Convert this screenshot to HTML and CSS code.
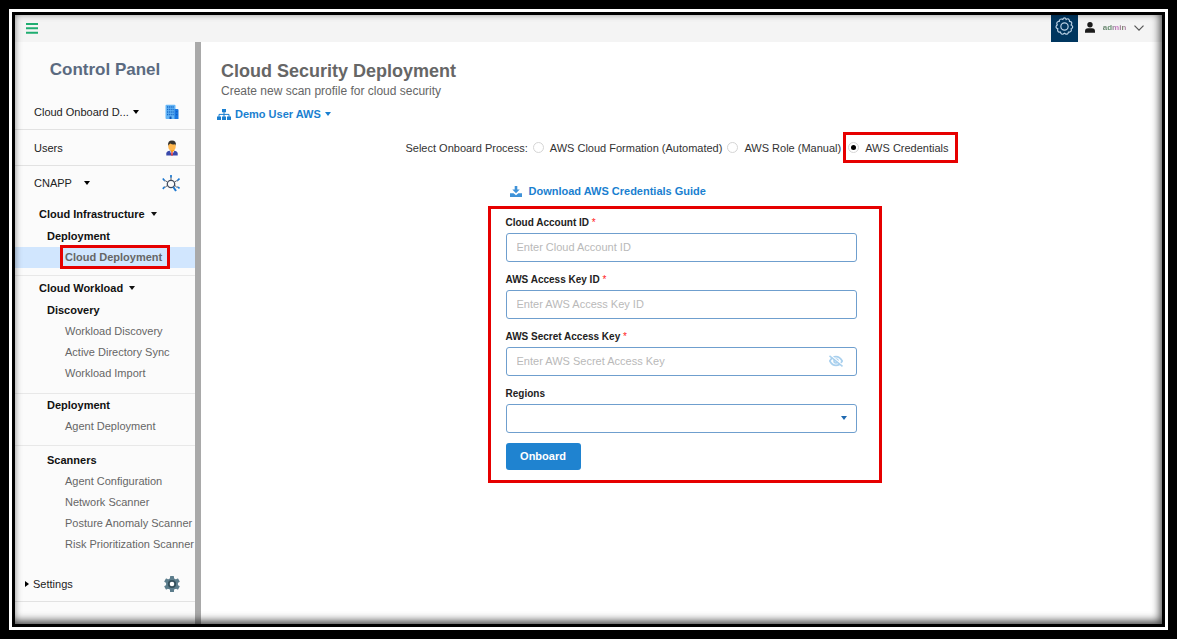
FILE: index.html
```html
<!DOCTYPE html>
<html lang="en">
<head>
<meta charset="utf-8">
<title>Cloud Security Deployment</title>
<link rel="stylesheet" href="styles.css">
</head>
<body>
<div class="frame">
<div class="mat">
<div class="app">
  <header class="topbar">
    <button class="icon-button menu" aria-label="Toggle menu">
      <svg width="12" height="11" viewBox="0 0 12 11"><path d="M0 0h12v2H0zM0 4.3h12v2H0zM0 8.8h12v2H0z" fill="#1fad70"/></svg>
    </button>
    <div class="account">
      <button class="icon-button gear" aria-label="Settings">
        <svg width="19" height="19" viewBox="0 0 24 24" fill="none" stroke="#b9d0e4" stroke-width="1.5"><circle cx="12" cy="12" r="4.6"/><path d="M10.300 2.200 Q12 .2 13.700 2.200 L14.100 3.100 Q17 .9 18.300 4.300 L18.300 5.500 Q21.900 5.600 21 9 L20.400 10 Q23.700 11.900 21.400 14.400 L20.400 15 Q21.500 18.500 18.200 19 L17 19 Q16.100 22.600 13.300 21.300 L12 20.500 Q9.200 23.100 7.300 20.300 L7 19 Q3.300 19.500 3.200 16.200 L3.600 15 Q.2 13.800 1.800 11 L2.900 10 Q1.100 6.900 4.100 5.600 L5.400 5.500 Q5.700 1.800 8.800 2.700 L9.900 3.200 Z"/></svg>
      </button>
      <button class="user">
        <svg width="10" height="11" viewBox="0 0 10 11" fill="#1b1b1b"><circle cx="5" cy="2.800" r="2.700"/><path d="M0 10.800V9.300Q0 6.300 3 6.300H7Q10 6.300 10 9.300V10.800Z"/></svg>
        <span class="user-name">admin</span>
        <svg width="10" height="6" viewBox="0 0 10 6" fill="none" stroke="#555" stroke-width="1.200"><path d="M.5 .6 5 5.100 9.500 .6"/></svg>
      </button>
    </div>
  </header>

  <div class="body">
    <nav class="sidebar">
      <h2 class="panel-title">Control Panel</h2>
      <button class="row ruled"><span class="row-label">Cloud Onboard D...</span><i class="caret"></i>
        <svg class="row-icon" width="16" height="16" viewBox="0 0 16 16"><rect x="1.500" y=".8" width="10" height="14.200" rx="1" fill="#64b5f6"/><path d="M10.500 5H13.500Q14.500 5 14.500 6V15H10.500Z" fill="#1976e0"/><path d="M3 3h7M3 5.500h7M3 8h7M3 10.500h7" stroke="#1769c8" stroke-width="1.300" stroke-dasharray="1.300 .8"/><path d="M5.500 12.500h2V15h-2zM12.300 7h1v1.300h-1zM12.300 10h1v1.300h-1z" fill="#0d55b5"/></svg>
      </button>
      <a class="row ruled" href="#"><span class="row-label">Users</span>
        <svg class="row-icon" width="16" height="16" viewBox="0 0 16 16"><path d="M2.300 15.500V13.500Q2.300 10.700 8 10.500 13.700 10.700 13.700 13.500V15.500Z" fill="#3949ab"/><path d="M5.800 9H10.200V11L8 13Z" fill="#ff9800"/><path d="M5.600 10.800 8 15 10.400 10.800 8 12.200Z" fill="#fff"/><path d="M7.400 12H8.600L9 15.500H7Z" fill="#e53935"/><ellipse cx="8" cy="6.200" rx="3.700" ry="4.300" fill="#ffb74d"/><path d="M4 6Q3.600 .6 8 .6 12.400 .6 12 6L11.300 4.300Q8 4.800 6.500 3.600L4.700 4.800Z" fill="#37342f"/></svg>
      </a>
      <button class="row cnapp"><span class="row-label">CNAPP</span><i class="caret"></i>
        <svg class="row-icon" width="18" height="17" viewBox="0 0 18 17" fill="none"><circle cx="9" cy="9" r="3.700" stroke="#414a5c" stroke-width="1.300"/><path d="M11.300 12 14 16" stroke="#1d78d0" stroke-width="2"/><path d="M9 5V1.500M12.500 7 14.500 5.800H16M5.500 7 3.500 5.800H2M12.900 10.500 14.500 12H16M5.300 10.500 3.500 12H2" stroke="#56606e"/><path d="M9 0V2.500M15.500 5.500 17.500 3.500M2.500 5.500 .8 3.500M16 12 17.500 13.500M2.500 12 .8 13.800" stroke="#1d78d0" stroke-width="1.700"/></svg>
      </button>

      <section class="group first">
        <button class="group-title">Cloud Infrastructure<i class="caret"></i></button>
        <h3 class="subtitle">Deployment</h3>
        <a class="item selected" href="#"><span class="marked">Cloud Deployment</span></a>
      </section>
      <section class="group workload">
        <button class="group-title">Cloud Workload<i class="caret"></i></button>
        <h3 class="subtitle">Discovery</h3>
        <a class="item" href="#">Workload Discovery</a>
        <a class="item" href="#">Active Directory Sync</a>
        <a class="item" href="#">Workload Import</a>
      </section>
      <section class="group">
        <h3 class="subtitle">Deployment</h3>
        <a class="item" href="#">Agent Deployment</a>
      </section>
      <section class="group scanners">
        <h3 class="subtitle">Scanners</h3>
        <a class="item" href="#">Agent Configuration</a>
        <a class="item" href="#">Network Scanner</a>
        <a class="item" href="#">Posture Anomaly Scanner</a>
        <a class="item" href="#">Risk Prioritization Scanner</a>
      </section>
      <button class="row ruled settings"><i class="caret side"></i><span class="row-label">Settings</span>
        <svg class="row-icon" width="16" height="16" viewBox="0 0 16 16"><g fill="#5c7d8c"><circle cx="8" cy="8" r="6"/><rect x="6" y="0" width="4" height="16" rx=".6"/><rect x="6" y="0" width="4" height="16" rx=".6" transform="rotate(60 8 8)"/><rect x="6" y="0" width="4" height="16" rx=".6" transform="rotate(120 8 8)"/></g><circle cx="8" cy="8" r="3.200" fill="#fff" stroke="#34505c" stroke-width="1.800"/></svg>
      </button>
    </nav>

    <main class="content">
      <h1 class="title">Cloud Security Deployment</h1>
      <p class="tagline">Create new scan profile for cloud security</p>
      <button class="tenant">
        <svg width="14" height="11" viewBox="0 0 14 11" fill="#1a7fd0"><path d="M5 0h4v3.200H5zM0 7.500h4V11H0zM5 7.500h4V11H5zM10 7.500h4V11h-4z"/><path d="M7 3V8M2 8V5.400H12V8" fill="none" stroke="#1a7fd0"/></svg>
        <span>Demo User AWS</span><i class="caret"></i>
      </button>

      <fieldset class="process" aria-labelledby="process-label">
        <span id="process-label">Select Onboard Process:</span>
        <label class="choice"><input type="radio" name="process">AWS Cloud Formation (Automated)</label>
        <label class="choice"><input type="radio" name="process">AWS Role (Manual)</label>
        <label class="choice chosen"><input type="radio" name="process" checked>AWS Credentials</label>
      </fieldset>

      <div class="form-area">
        <a class="guide" href="#">
          <svg width="12" height="11" viewBox="0 0 12 11" fill="#3f92d8"><path d="M4.700 0h2.600v3.500h2.400L6 7.300 2.300 3.500h2.400z"/><path d="M0 7.300H3.600L6 9.300 8.400 7.300H12V11H0Z"/></svg>
          Download AWS Credentials Guide
        </a>
        <form class="credentials">
          <div class="field">
            <label for="account">Cloud Account ID <span class="required">*</span></label>
            <input id="account" type="text" placeholder="Enter Cloud Account ID">
          </div>
          <div class="field">
            <label for="access">AWS Access Key ID <span class="required">*</span></label>
            <input id="access" type="text" placeholder="Enter AWS Access Key ID">
          </div>
          <div class="field">
            <label for="secret">AWS Secret Access Key <span class="required">*</span></label>
            <div class="control">
              <input id="secret" type="password" placeholder="Enter AWS Secret Access Key">
              <button type="button" class="icon-button reveal" aria-label="Show key">
                <svg width="14" height="12" viewBox="0 0 14 12" fill="none" stroke="#a9d0ee"><path d="M.8 6Q3.200 1.600 7 1.600T13.200 6Q10.800 10.400 7 10.400T.8 6Z" stroke-width="1.700"/><circle cx="7" cy="6" r="2" stroke-width="1.500"/><path d="M1.500 .2 14 10.400" stroke="#fff" stroke-width="1.400"/><path d="M.5 .8 13.500 11.400" stroke-width="1.500"/></svg>
              </button>
            </div>
          </div>
          <div class="field">
            <label for="regions">Regions</label>
            <div class="control">
              <select id="regions"><option></option></select>
              <i class="caret select-caret"></i>
            </div>
          </div>
          <button type="button" class="submit">Onboard</button>
        </form>
      </div>
    </main>
  </div>
</div>
</div>
</div>
</body>
</html>
```
FILE: styles.css
```css
* { box-sizing: border-box; }
body {
  margin: 0;
  font-family: "Liberation Sans", Arial, sans-serif;
  font-size: 11px;
  color: #333;
}
h1, h2, h3, p { margin: 0; }
a { color: inherit; text-decoration: none; }
button {
  margin: 0;
  padding: 0;
  border: 0;
  background: none;
  font: inherit;
  color: inherit;
  text-align: left;
  cursor: pointer;
}
svg { display: block; flex: none; }

/* Picture frame around the application */
.frame {
  display: flex;
  min-height: 100vh;
  padding: 9px;
  background: #000;
}
.mat {
  display: flex;
  flex: 1;
  border: 3px solid #fff;
}
.app {
  position: relative;
  display: flex;
  flex: 1;
  flex-direction: column;
  border: 3px solid #000;
  background: #fff;
}
.app::after {
  content: "";
  position: absolute;
  inset: 0;
  box-shadow: inset -2px -3px 9px rgba(0, 0, 0, .75);
  pointer-events: none;
}

.topbar {
  display: flex;
  justify-content: space-between;
  height: 27px;
  padding: 0 18px 0 11px;
  background: #f4f4f4;
}
.icon-button { display: flex; align-items: center; justify-content: center; }
.account { display: flex; }
.gear { width: 27px; padding-bottom: 5px; background: #00365f; }
.user { display: flex; align-items: center; gap: 6px; padding: 0 0 2px 7px; }
.user-name {
  width: 27px;
  background: linear-gradient(90deg, #6d7d70, #5f8f6a 35%, #d276cc 60%, #7a7f6c 80%, #e08ae0);
  background-clip: text;
  font-size: 8px;
  font-weight: bold;
  color: transparent;
  text-align: center;
}

.body { display: flex; flex: 1; }
.sidebar {
  display: flex;
  flex: none;
  flex-direction: column;
  width: 186px;
  padding-bottom: 22px;
  border-right: 6px solid #a9a9a9;
  background: #fbfbfb;
}
.panel-title {
  padding: 18px 0 14px;
  font-size: 17px;
  line-height: 20px;
  color: #5a6a80;
  text-align: center;
}
.caret {
  width: 0;
  height: 0;
  border: 3px solid transparent;
  border-top: 4px solid currentColor;
  border-bottom: 0;
}
.caret.side {
  border: 3px solid transparent;
  border-left: 4px solid currentColor;
  border-right: 0;
}
.row {
  display: flex;
  align-items: center;
  gap: 4px;
  height: 36px;
  padding: 0 15px 0 19px;
  color: #222;
}
.row .caret { color: #000; }
.row-icon { margin-left: auto; }
.cnapp { gap: 12px; height: 34px; }
.ruled { border-bottom: 1px solid #e2e2e2; }
.group { padding-bottom: 8px; border-bottom: 1px solid #e8e8e8; }
.group-title, .subtitle {
  display: flex;
  align-items: center;
  gap: 6px;
  height: 22px;
  font-size: 11px;
  font-weight: bold;
  color: #111;
}
.group-title { padding-left: 24px; }
.subtitle { padding-left: 32px; }
.item {
  display: block;
  padding-left: 50px;
  line-height: 21px;
  color: #666;
  white-space: nowrap;
}
.selected { background: #d1e6fe; font-weight: bold; }
.marked { position: relative; display: inline-block; }
.marked::after {
  content: "";
  position: absolute;
  inset: -2px -8px -1px -5px;
  border: 3px solid #e60000;
}
.first { padding: 3px 0 7px; }
.workload { padding: 1px 0 9px; }
.scanners { padding: 3px 0 11px; border-bottom: 0; }
.settings { padding-left: 10px; }

.content { flex: 1; padding: 18px 10px 18px 16px; }
.title {
  padding-left: 4px;
  font-size: 18px;
  line-height: 22px;
  color: #666;
}
.tagline {
  padding-left: 4px;
  font-size: 12px;
  line-height: 18px;
  color: #666;
}
.tenant {
  display: flex;
  align-items: center;
  gap: 4px;
  height: 28px;
  font-weight: bold;
  color: #1a7fd0;
}
.process {
  display: flex;
  align-items: center;
  justify-content: center;
  gap: 5px;
  height: 31px;
  margin: 4px 0 0;
  padding: 0 6px 0 0;
  border: 0;
}
.choice { display: flex; align-items: center; gap: 6px; }
.choice input {
  appearance: none;
  display: grid;
  place-items: center;
  width: 11px;
  height: 11px;
  margin: 0;
  border: 1px solid #d5d5d5;
  border-radius: 50%;
  background: #fff;
}
.choice input:checked::before {
  content: "";
  width: 5px;
  height: 5px;
  border-radius: 50%;
  background: #000;
}
.chosen {
  height: 31px;
  margin-left: -3px;
  padding: 0 6px 0 2px;
  border: 3px solid #e60000;
}
.form-area { width: 394px; max-width: 100%; margin: 20px auto 0; }
.guide {
  display: flex;
  align-items: center;
  gap: 7px;
  height: 16px;
  padding-left: 22px;
  font-weight: bold;
  color: #1a7fd0;
}
.credentials {
  margin-top: 7px;
  padding: 6px 22px 10px 15px;
  border: 3px solid #e60000;
}
.field { display: flex; flex-direction: column; gap: 2px; margin-bottom: 10px; }
.field label {
  font-size: 10px;
  font-weight: bold;
  line-height: 16px;
  color: #222;
}
.required { font-weight: normal; color: #f22; }
.control { position: relative; display: flex; }
.field input, .field select {
  appearance: none;
  width: 100%;
  height: 29px;
  padding: 0 10px 2px;
  border: 1px solid #6f9fce;
  border-radius: 3px;
  background: #fff;
  font: inherit;
  color: #333;
}
.field input::placeholder { color: #b9b9b9; opacity: 1; }
.reveal { position: absolute; top: 8px; right: 14px; }
.select-caret {
  position: absolute;
  top: 12px;
  right: 10px;
  color: #1f69b0;
  pointer-events: none;
}
.submit {
  width: 75px;
  height: 27px;
  padding-bottom: 2px;
  border-radius: 3px;
  background: #1f83d0;
  font-weight: bold;
  color: #fff;
  text-align: center;
}
```
